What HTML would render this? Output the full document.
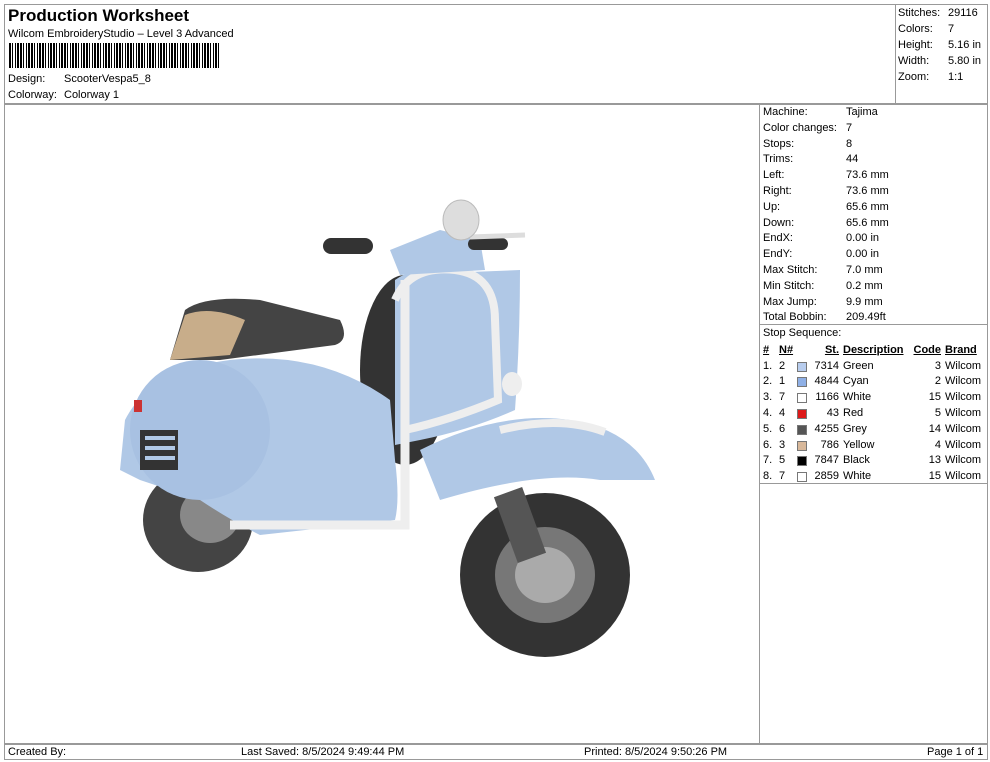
<!DOCTYPE html>
<html><head><style>
*{margin:0;padding:0;box-sizing:border-box}
body{width:990px;height:762px;background:#fff;font-family:"Liberation Sans",Arial,sans-serif;color:#000;position:relative;overflow:hidden;font-size:11px}
.a{position:absolute;white-space:nowrap}
.ln{position:absolute;background:#999}
.bc{position:absolute;left:9px;top:43px;width:210px;height:25px;background:repeating-linear-gradient(90deg,#000 0 2px,#fff 2px 3px,#000 3px 4px,#fff 4px 6px,#000 6px 7px,#fff 7px 8px,#000 8px 10px,#fff 10px 11px)}
table{border-collapse:collapse;font-size:11px}
td{padding:0;height:15.8px}
</style></head><body>
<div class="ln" style="left:4px;top:4px;width:984px;height:1px"></div>
<div class="ln" style="left:4px;top:4px;width:1px;height:756px"></div>
<div class="ln" style="left:987px;top:4px;width:1px;height:756px"></div>
<div class="ln" style="left:4px;top:103px;width:984px;height:2px"></div>
<div class="ln" style="left:895px;top:4px;width:1px;height:99px"></div>
<div class="ln" style="left:759px;top:104px;width:1px;height:640px"></div>
<div class="ln" style="left:4px;top:743px;width:984px;height:2px"></div>
<div class="ln" style="left:4px;top:759px;width:984px;height:1px"></div>
<div class="ln" style="left:759px;top:324px;width:229px;height:1px"></div>
<div class="ln" style="left:759px;top:483px;width:229px;height:1px"></div>

<div class="a" style="left:8px;top:6px;font-size:17px;font-weight:bold">Production Worksheet</div>
<div class="a" style="left:8px;top:28px">Wilcom EmbroideryStudio – Level 3 Advanced</div>
<div class="bc"></div>
<div class="a" style="left:8px;top:73px">Design:</div><div class="a" style="left:64px;top:73px">ScooterVespa5_8</div>
<div class="a" style="left:8px;top:89px">Colorway:</div><div class="a" style="left:64px;top:89px">Colorway 1</div>

<div class="a" style="left:898px;top:5px;line-height:16px">Stitches:<br>Colors:<br>Height:<br>Width:<br>Zoom:</div>
<div class="a" style="left:948px;top:5px;line-height:16px">29116<br>7<br>5.16 in<br>5.80 in<br>1:1</div>

<div class="a" style="left:763px;top:105px;line-height:15.8px">Machine:<br>Color changes:<br>Stops:<br>Trims:<br>Left:<br>Right:<br>Up:<br>Down:<br>EndX:<br>EndY:<br>Max Stitch:<br>Min Stitch:<br>Max Jump:<br>Total Bobbin:<br>Stop Sequence:</div>
<div class="a" style="left:846px;top:105px;line-height:15.8px">Tajima<br>7<br>8<br>44<br>73.6 mm<br>73.6 mm<br>65.6 mm<br>65.6 mm<br>0.00 in<br>0.00 in<br>7.0 mm<br>0.2 mm<br>9.9 mm<br>209.49ft</div>

<table class="a" style="left:763px;top:342px">
<tr style="font-weight:bold;text-decoration:underline"><td style="width:16px">#</td><td style="width:18px">N#</td><td style="width:42px;text-align:right">St.</td><td style="width:70px;padding-left:4px">Description</td><td style="width:32px;text-align:right">Code</td><td style="padding-left:4px">Brand</td></tr>
<tr><td>1.</td><td>2</td><td style="text-align:right"><span style="float:left;margin-top:2px;width:10px;height:10px;border:1px solid #777;background:#b8cdee"></span>7314</td><td style="padding-left:4px">Green</td><td style="text-align:right">3</td><td style="padding-left:4px">Wilcom</td></tr>
<tr><td>2.</td><td>1</td><td style="text-align:right"><span style="float:left;margin-top:2px;width:10px;height:10px;border:1px solid #777;background:#8fb0e6"></span>4844</td><td style="padding-left:4px">Cyan</td><td style="text-align:right">2</td><td style="padding-left:4px">Wilcom</td></tr>
<tr><td>3.</td><td>7</td><td style="text-align:right"><span style="float:left;margin-top:2px;width:10px;height:10px;border:1px solid #777;background:#fff"></span>1166</td><td style="padding-left:4px">White</td><td style="text-align:right">15</td><td style="padding-left:4px">Wilcom</td></tr>
<tr><td>4.</td><td>4</td><td style="text-align:right"><span style="float:left;margin-top:2px;width:10px;height:10px;border:1px solid #777;background:#dd1a1a"></span>43</td><td style="padding-left:4px">Red</td><td style="text-align:right">5</td><td style="padding-left:4px">Wilcom</td></tr>
<tr><td>5.</td><td>6</td><td style="text-align:right"><span style="float:left;margin-top:2px;width:10px;height:10px;border:1px solid #777;background:#555"></span>4255</td><td style="padding-left:4px">Grey</td><td style="text-align:right">14</td><td style="padding-left:4px">Wilcom</td></tr>
<tr><td>6.</td><td>3</td><td style="text-align:right"><span style="float:left;margin-top:2px;width:10px;height:10px;border:1px solid #777;background:#d8b89a"></span>786</td><td style="padding-left:4px">Yellow</td><td style="text-align:right">4</td><td style="padding-left:4px">Wilcom</td></tr>
<tr><td>7.</td><td>5</td><td style="text-align:right"><span style="float:left;margin-top:2px;width:10px;height:10px;border:1px solid #777;background:#000"></span>7847</td><td style="padding-left:4px">Black</td><td style="text-align:right">13</td><td style="padding-left:4px">Wilcom</td></tr>
<tr><td>8.</td><td>7</td><td style="text-align:right"><span style="float:left;margin-top:2px;width:10px;height:10px;border:1px solid #777;background:#fff"></span>2859</td><td style="padding-left:4px">White</td><td style="text-align:right">15</td><td style="padding-left:4px">Wilcom</td></tr>
</table>

<svg class="a" style="left:0;top:0" width="760" height="740">
<ellipse cx="198" cy="520" rx="55" ry="52" fill="#444"/>
<ellipse cx="210" cy="515" rx="30" ry="28" fill="#888"/>
<ellipse cx="405" cy="370" rx="45" ry="95" fill="#333"/>
<ellipse cx="545" cy="575" rx="85" ry="82" fill="#333"/>
<ellipse cx="545" cy="575" rx="50" ry="48" fill="#777"/>
<ellipse cx="545" cy="575" rx="30" ry="28" fill="#aaa"/>
<path d="M170 360 L185 310 Q205 295 260 300 L340 320 Q350 340 335 345 L220 360 Z" fill="#444"/>
<path d="M170 360 L185 315 Q210 305 245 320 L230 355 Z" fill="#c8ad8a"/>
<path d="M120 470 L125 420 Q150 370 230 360 Q320 350 390 400 L395 460 Q400 500 395 520 L260 535 Q230 520 200 500 L140 480 Z" fill="#b0c8e6"/>
<ellipse cx="200" cy="430" rx="70" ry="70" fill="#a8c1e2"/>
<path d="M300 380 Q330 380 380 440 L380 520 L260 530 Q280 470 300 380Z" fill="#b0c8e6"/>
<rect x="140" y="430" width="38" height="40" fill="#333"/>
<rect x="145" y="436" width="30" height="4" fill="#b0c8e6"/><rect x="145" y="446" width="30" height="4" fill="#b0c8e6"/><rect x="145" y="456" width="30" height="4" fill="#b0c8e6"/>
<rect x="134" y="400" width="8" height="12" fill="#c33"/>
<path d="M395 280 Q420 262 470 272 L520 270 Q520 340 515 410 Q470 430 420 440 L395 445 Z" fill="#b0c8e6"/>
<path d="M395 300 Q410 265 455 270 Q495 275 495 320 L498 400 Q450 420 405 430" fill="none" stroke="#eee" stroke-width="8"/>
<path d="M405 280 L405 525 L230 525" fill="none" stroke="#eee" stroke-width="9"/>
<path d="M390 250 L440 230 L480 240 L485 270 L400 275 Z" fill="#b0c8e6"/>
<rect x="323" y="238" width="50" height="16" rx="8" fill="#333"/>
<rect x="468" y="238" width="40" height="12" rx="6" fill="#333"/>
<line x1="470" y1="237" x2="525" y2="235" stroke="#ddd" stroke-width="5"/>
<ellipse cx="461" cy="220" rx="18" ry="20" fill="#ddd" stroke="#bbb"/>
<path d="M420 450 Q500 410 570 420 Q635 430 655 480 L600 480 Q540 470 440 500 Z" fill="#b0c8e6"/>
<path d="M500 430 Q560 415 605 432" fill="none" stroke="#eee" stroke-width="8"/>
<rect x="505" y="490" width="30" height="70" fill="#555" transform="rotate(-20 520 525)"/>
<ellipse cx="512" cy="384" rx="10" ry="12" fill="#eee"/>
</svg>

<div class="a" style="left:8px;top:746px">Created By:</div>
<div class="a" style="left:241px;top:746px">Last Saved: 8/5/2024 9:49:44 PM</div>
<div class="a" style="left:584px;top:746px">Printed: 8/5/2024 9:50:26 PM</div>
<div class="a" style="left:927px;top:746px">Page 1 of 1</div>
</body></html>
